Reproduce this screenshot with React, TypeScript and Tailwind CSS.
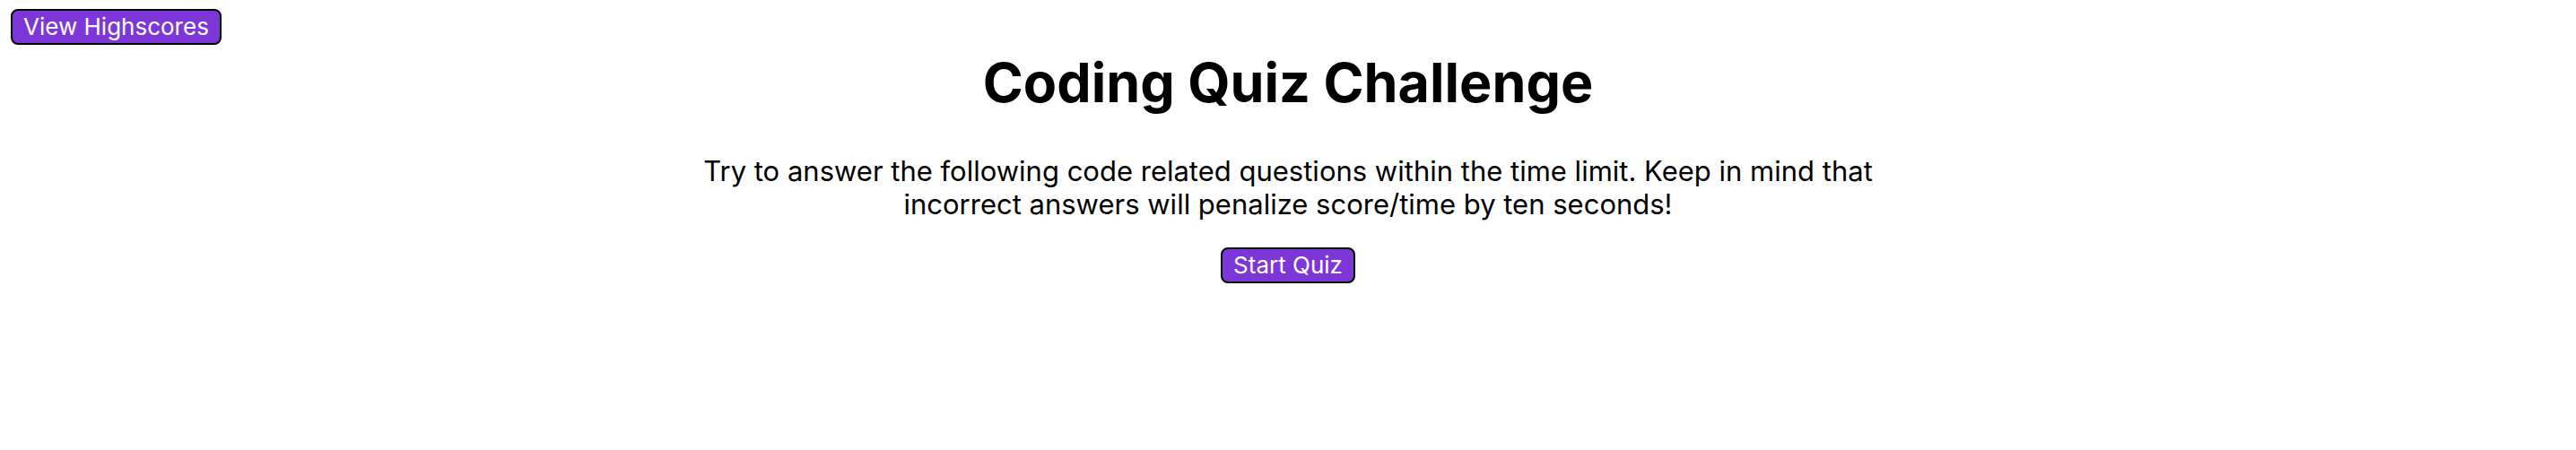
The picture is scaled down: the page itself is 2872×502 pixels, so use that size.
export default function App() {
  return (
    <div className="bg-white px-3 pt-[10px] font-['Inter',sans-serif] text-black">
      <header className="flex">
        <a href="#highscores" className="rounded-[8px] border-2 border-black bg-[#7d37d8] px-3 text-[26px] leading-[36px] text-white">
          View Highscores
        </a>
      </header>
      <main className="mx-auto flex max-w-[1320px] flex-col items-center text-center">
        <h1 className="mt-1 text-[61px] leading-[76px] font-bold">Coding Quiz Challenge</h1>
        <p className="mt-[42px] text-[31px] leading-[37px]">
          Try to answer the following code related questions within the time limit. Keep in mind that incorrect answers will penalize score/time by ten seconds!
        </p>
        <button type="button" className="mt-[30px] rounded-[8px] border-2 border-black bg-[#7d37d8] px-3 text-[26px] leading-[36px] text-white">
          Start Quiz
        </button>
      </main>
    </div>
  );
}
